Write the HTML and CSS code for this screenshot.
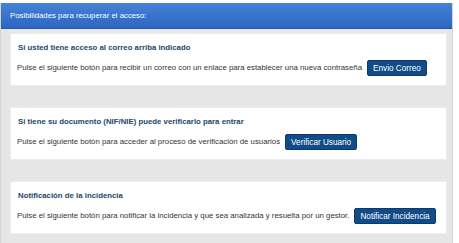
FILE: index.html
```html
<!DOCTYPE html>
<html lang="es">
<head>
  <meta charset="UTF-8" />
  <title>Recuperar acceso</title>
  <meta name="viewport" content="width=device-width, initial-scale=1.0" />
  <link rel="stylesheet" href="styles.css">
</head>
<body>
  <div class="panel">
    <div class="panel-header">Posibilidades para recuperar el acceso:</div>
    <div class="panel-body">
      <div class="card">
        <h3>Si usted tiene acceso al correo arriba indicado</h3>
        <div class="row">
          <span>Pulse el siguiente botón para recibir un correo con un enlace para establecer una nueva contraseña</span>
          <button type="button">Envio Correo</button>
        </div>
      </div>
      <div class="card">
        <h3>Si tiene su documento (NIF/NIE) puede verificarlo para entrar</h3>
        <div class="row">
          <span>Pulse el siguiente botón para acceder al proceso de verificación de usuarios</span>
          <button type="button">Verificar Usuario</button>
        </div>
      </div>
      <div class="card">
        <h3>Notificación de la incidencia</h3>
        <div class="row">
          <span>Pulse el siguiente botón para notificar la incidencia y que sea analizada y resuelta por un gestor.</span>
          <button type="button">Notificar Incidencia</button>
        </div>
      </div>
    </div>
  </div>
</body>
</html>
```

FILE: styles.css
```css
body {
  margin: 0;
  padding-top: 3px;
  background: #fff;
  font-family: 'Liberation Sans', Arial, sans-serif;
  font-size: 7.8px;
  color: #333;
}

.panel {
  width: 453px;
  border: 1px solid #d4d4d4;
  border-top: none;
  box-sizing: border-box;
  background: #e6e6e6;
}

.panel-header {
  height: 26px;
  display: flex;
  align-items: center;
  padding-left: 9px;
  color: #fff;
  font-size: 7.8px;
  background: linear-gradient(to bottom, #4682d8, #2c66c0);
  border-bottom: 1px solid #2a5aa6;
  box-sizing: border-box;
}

.panel-body {
  display: flex;
  flex-direction: column;
  gap: 21px;
  padding: 4px 5px 20px 9px;
}

.card {
  background: #fff;
  height: 53px;
  box-sizing: border-box;
  padding: 9px 6px 0 6px;
  border: 1px solid #ececec;
}

.card h3 {
  margin: 0 0 0 1px;
  font-size: 7.8px;
  font-weight: bold;
  color: #23466b;
  line-height: 10px;
}

.row {
  display: flex;
  align-items: center;
  gap: 5px;
  margin-top: 7px;
  line-height: 10px;
  white-space: nowrap;
}

button {
  flex-shrink: 0;
  font-family: 'Liberation Sans', Arial, sans-serif;
  font-size: 8.2px;
  color: #fff;
  background: #124c88;
  border: 1px solid #0b3a6c;
  border-radius: 2px;
  height: 16px;
  padding: 0 5px;
  cursor: pointer;
}
```
